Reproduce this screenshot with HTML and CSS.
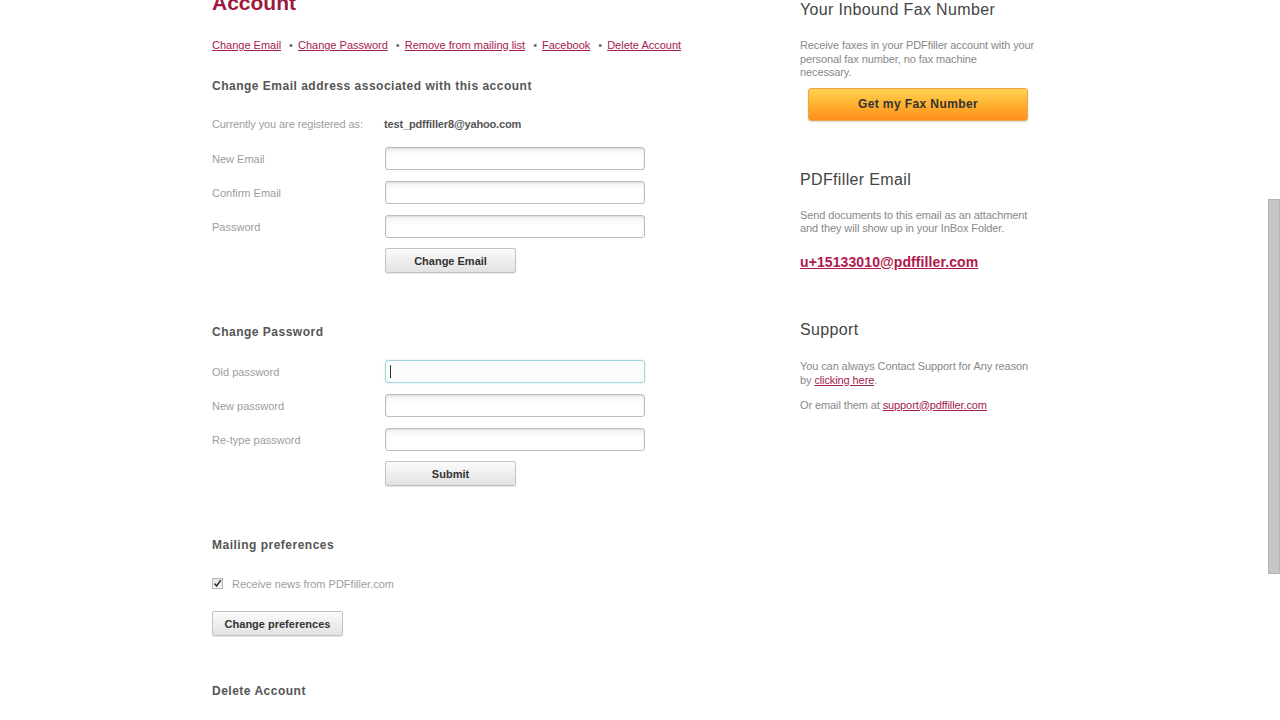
FILE: index.html
```html
<!DOCTYPE html>
<html lang="en">
<head>
    <meta charset="UTF-8">
    <title>Account - PDFfiller</title>
    <link rel="stylesheet" href="styles.css">
</head>
<body>
    <div class="page">
        <div class="main">
            <h1>Account</h1>

            <div class="nav-links">
                <a href="#">Change Email</a>
                <span class="dot">&bull;</span>
                <a href="#">Change Password</a>
                <span class="dot">&bull;</span>
                <a href="#">Remove from mailing list</a>
                <span class="dot">&bull;</span>
                <a href="#">Facebook</a>
                <span class="dot">&bull;</span>
                <a href="#">Delete Account</a>
            </div>

            <h3 class="section-title first">Change Email address associated with this account</h3>

            <div class="info-row">
                <span class="label">Currently you are registered as:</span>
                <span class="value">test_pdffiller8@yahoo.com</span>
            </div>

            <div class="form-row first-input">
                <label class="label">New Email</label>
                <input type="text">
            </div>
            <div class="form-row">
                <label class="label">Confirm Email</label>
                <input type="text">
            </div>
            <div class="form-row">
                <label class="label">Password</label>
                <input type="password">
            </div>
            <div class="button-row">
                <button class="btn">Change Email</button>
            </div>

            <h3 class="section-title">Change Password</h3>

            <div class="form-row first-field">
                <label class="label">Old password</label>
                <div class="input-wrap">
                    <input type="password" class="focused">
                    <span class="caret"></span>
                </div>
            </div>
            <div class="form-row">
                <label class="label">New password</label>
                <input type="password">
            </div>
            <div class="form-row">
                <label class="label">Re-type password</label>
                <input type="password">
            </div>
            <div class="button-row">
                <button class="btn">Submit</button>
            </div>

            <h3 class="section-title">Mailing preferences</h3>

            <div class="check-row">
                <span class="checkbox">
                    <svg width="9" height="9" viewBox="0 0 9 9"><path d="M1.5 4.5 L3.5 7 L7.8 1.2" fill="none" stroke="#333" stroke-width="1.6"/></svg>
                </span>
                <span>Receive news from PDFfiller.com</span>
            </div>
            <button class="btn prefs">Change preferences</button>

            <h3 class="section-title delete">Delete Account</h3>
        </div>

        <div class="sidebar">
            <h2>Your Inbound Fax Number</h2>
            <p>Receive faxes in your PDFfiller account with your personal fax number, no fax machine<br>necessary.</p>
            <button class="fax-btn">Get my Fax Number</button>

            <h2 class="spaced">PDFfiller Email</h2>
            <p>Send documents to this email as an attachment and they will show up in your InBox Folder.</p>
            <a href="#" class="inbox-email">u+15133010@pdffiller.com</a>

            <h2 class="spaced">Support</h2>
            <p class="support">You can always Contact Support for Any reason by <a href="#">clicking here</a>.</p>
            <p class="small-gap">Or email them at <a href="#">support@pdffiller.com</a></p>
        </div>
    </div>

    <div class="scrollbar"><div class="thumb"></div></div>
</body>
</html>
```

FILE: styles.css
```css
body {
    margin: 0;
    background-color: #fff;
    font-family: "Liberation Sans", Arial, sans-serif;
    color: #555;
    overflow: hidden;
}

.page {
    width: 856px;
    margin: 0 auto;
    display: grid;
    grid-template-columns: 588px 268px;
}

a {
    color: #a3224d;
    text-decoration: underline;
}

/* left column */
h1 {
    margin: -9px 0 0;
    font-size: 21px;
    line-height: 24px;
    color: #9b1b3e;
}

.nav-links {
    margin-top: 23px;
    font-size: 11px;
    line-height: 14px;
    display: flex;
    align-items: center;
}

.nav-links .dot {
    color: #666;
    margin: 0 5px 0 8px;
}

.section-title {
    margin: 51px 0 0;
    font-size: 12px;
    line-height: 16px;
    letter-spacing: 0.5px;
    color: #555;
}

.section-title.first {
    margin-top: 26px;
}

.section-title.delete {
    margin-top: 47px;
}

.label {
    display: block;
    width: 173px;
    font-size: 11px;
    color: #9d9d9d;
}

.info-row {
    margin-top: 23px;
    display: flex;
    align-items: center;
    height: 14px;
    font-size: 11px;
}

.info-row .label {
    width: 172px;
    letter-spacing: -0.1px;
}

.info-row .value {
    font-weight: bold;
    letter-spacing: -0.15px;
    color: #555;
}

.form-row {
    display: flex;
    align-items: center;
    margin-top: 11px;
}

.form-row.first-input {
    margin-top: 16px;
}

.form-row.first-field {
    margin-top: 20px;
}

.form-row input,
.input-wrap {
    width: 260px;
    height: 23px;
    box-sizing: border-box;
}

.form-row input {
    margin: 0;
    padding: 0 4px;
    border: 1px solid #bdbdbd;
    border-radius: 3px;
    background: linear-gradient(#f2f2f2, #fff 40%);
    box-shadow: inset 0 1px 2px rgba(0, 0, 0, 0.1);
    outline: none;
}

.form-row input.focused {
    border-color: #a4d6dd;
    background: #fbfdfd;
    box-shadow: 0 0 2px rgba(120, 200, 210, 0.5);
}

.input-wrap {
    position: relative;
}

.caret {
    position: absolute;
    left: 5px;
    top: 5px;
    width: 1px;
    height: 13px;
    background-color: #333;
}

.button-row {
    margin-top: 10px;
    padding-left: 173px;
}

.btn {
    width: 131px;
    height: 25px;
    margin: 0;
    padding: 0;
    border: 1px solid #c2c2c2;
    border-radius: 2px;
    background: linear-gradient(#fbfbfb, #e2e2e2);
    box-shadow: 0 1px 1px rgba(0, 0, 0, 0.1);
    font-family: "Liberation Sans", Arial, sans-serif;
    font-size: 11px;
    font-weight: bold;
    color: #333;
    cursor: pointer;
}

.check-row {
    margin-top: 24px;
    display: flex;
    align-items: center;
    height: 14px;
    font-size: 11px;
    color: #9d9d9d;
}

.checkbox {
    display: flex;
    align-items: center;
    justify-content: center;
    width: 9px;
    height: 9px;
    margin: -2px 9px 0 0;
    border: 1px solid #b5b5b5;
    background: linear-gradient(#e6e6e6, #fafafa);
}

.btn.prefs {
    display: block;
    margin-top: 20px;
}

/* right column */
.sidebar h2 {
    margin: 0;
    font-size: 16px;
    line-height: 20px;
    font-weight: normal;
    letter-spacing: 0.35px;
    color: #444;
}

.sidebar h2.spaced {
    margin-top: 49px;
}

.sidebar p {
    margin: 19px 0 0;
    width: 240px;
    font-size: 11px;
    line-height: 13.5px;
    letter-spacing: -0.1px;
    color: #888;
}

.sidebar p.support {
    line-height: 14px;
}

.sidebar p.small-gap {
    margin-top: 12px;
}

.fax-btn {
    display: block;
    margin: 8px 0 0 8px;
    width: 220px;
    height: 33px;
    border: 1px solid #eaa449;
    border-radius: 3px;
    background: linear-gradient(#ffd450, #ffad2e 55%, #ff8f1c);
    box-shadow: 0 1px 2px rgba(0, 0, 0, 0.15);
    font-family: "Liberation Sans", Arial, sans-serif;
    font-size: 12px;
    font-weight: bold;
    letter-spacing: 0.4px;
    color: #333;
    cursor: pointer;
}

.inbox-email {
    display: block;
    margin-top: 17px;
    font-size: 14px;
    line-height: 18px;
    font-weight: bold;
    letter-spacing: 0.1px;
    color: #b0174a;
}

/* browser scrollbar */
.scrollbar {
    position: fixed;
    top: 0;
    right: 0;
    width: 13px;
    height: 720px;
    background-color: #fff;
}

.thumb {
    margin: 199px 0 0 1px;
    width: 10px;
    height: 373px;
    background-color: #c6c6c6;
    border: 1px solid #b4b4b4;
}
```
